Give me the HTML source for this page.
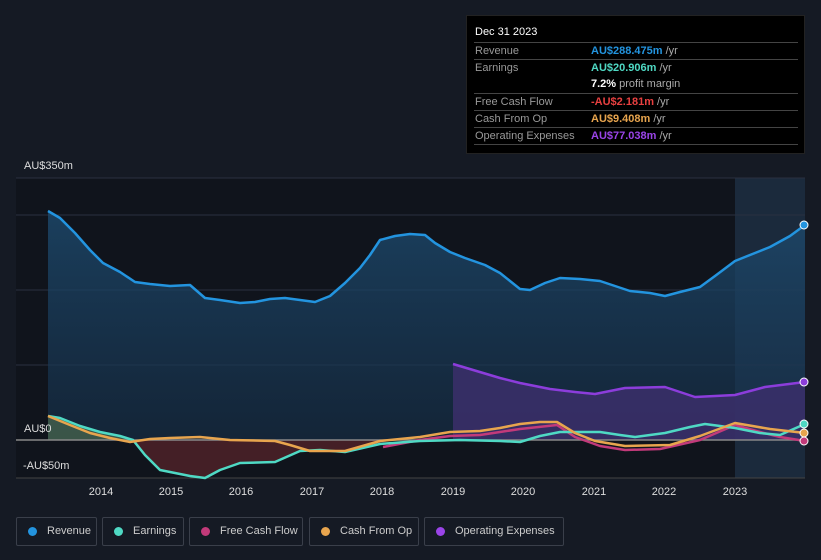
<!DOCTYPE html>
<html><head><style>
body{margin:0;width:821px;height:560px;background:#151a24;font-family:"Liberation Sans",sans-serif;overflow:hidden;position:relative}
.tt{position:absolute;left:466px;top:15px;width:339px;height:139px;background:#000;border:1px solid #222;box-sizing:border-box;font-size:11px;color:#999}
.tt .d{position:absolute;left:8px;top:10px;color:#fff;font-size:11px}
.row{position:absolute;left:7px;width:324px;height:17px;border-top:1px solid #444}
.row span{position:absolute;top:2px}
.row .l{left:1px}.row .v{left:117px;font-weight:bold}
.row .v i{font-style:normal;font-weight:normal;color:#aaa}
.lg{position:absolute;top:517px;height:29px;border:1px solid #3a3f4a;border-radius:2px;box-sizing:border-box;color:#ccc;font-size:11px;line-height:27px;padding-left:30px}
.lg b{position:absolute;left:11px;top:9px;width:9px;height:9px;border-radius:50%}
.ax{position:absolute;color:#ddd;font-size:11px}
</style></head><body>
<svg width="821" height="560" style="position:absolute;left:0;top:0">
<defs>
<linearGradient id="rg" x1="0" y1="0" x2="0" y2="1"><stop offset="0" stop-color="#1d4a6e" stop-opacity=".8"/><stop offset="1" stop-color="#16304a" stop-opacity=".6"/></linearGradient>
</defs>
<rect x="16" y="178" width="789" height="300" fill="#10141c"/>
<rect x="735" y="178" width="70" height="300" fill="#1b2a3c"/>
<g stroke="#2a3040" stroke-width="1">
<line x1="16" y1="178" x2="805" y2="178"/><line x1="16" y1="215" x2="805" y2="215"/><line x1="16" y1="290" x2="805" y2="290"/><line x1="16" y1="365" x2="805" y2="365"/><line x1="16" y1="478" x2="805" y2="478" stroke="#444"/>
</g>
<path d="M48,211 L60,218 L75,233 L90,250 L103,263 L120,272 L135,282 L150,284 L170,286 L190,285 L205,298 L220,300 L240,303 L255,302 L270,299 L285,298 L300,300 L315,302 L330,296 L345,283 L360,268 L370,255 L380,240 L395,236 L410,234 L425,235 L435,243 L450,252 L465,258 L485,265 L500,273 L510,281 L520,289 L530,290 L545,283 L560,278 L580,279 L600,281 L615,286 L630,291 L650,293 L665,296 L680,292 L700,287 L715,276 L735,261 L755,253 L770,247 L790,236 L805,225 L805,440 L48,440Z" fill="url(#rg)"/>
<path d="M453,364 L500,378 L520,383 L550,389 L575,392 L595,394 L610,391 L625,388 L665,387 L695,397 L735,395 L765,387 L805,382 L805,440 L453,440Z" fill="#3b2f6b" opacity=".85"/>
<path d="M133,440 L145,455 L160,470 L175,473 L190,476 L205,478 L220,470 L240,463 L275,462 L300,451 L320,450 L345,452 L380,444 L390,440Z" fill="#4a2028" opacity=".9"/>
<path d="M48,416 L60,418 L80,426 L100,432 L120,436 L133,440 L48,440Z" fill="#4a6a50" opacity=".7"/>
<line x1="16" y1="440" x2="805" y2="440" stroke="#888" stroke-width="1.5"/>
<g fill="none" stroke-width="2.5" stroke-linejoin="round">
<path stroke="#2394df" d="M48,211 L60,218 L75,233 L90,250 L103,263 L120,272 L135,282 L150,284 L170,286 L190,285 L205,298 L220,300 L240,303 L255,302 L270,299 L285,298 L300,300 L315,302 L330,296 L345,283 L360,268 L370,255 L380,240 L395,236 L410,234 L425,235 L435,243 L450,252 L465,258 L485,265 L500,273 L510,281 L520,289 L530,290 L545,283 L560,278 L580,279 L600,281 L615,286 L630,291 L650,293 L665,296 L680,292 L700,287 L715,276 L735,261 L755,253 L770,247 L790,236 L805,225"/>
<path stroke="#8c3ddb" d="M453,364 L500,378 L520,383 L550,389 L575,392 L595,394 L610,391 L625,388 L665,387 L695,397 L735,395 L765,387 L805,382"/>
<path stroke="#c23a7a" d="M383,447 L420,440 L450,436 L480,435 L500,432 L520,429 L557,425 L575,437 L600,446 L625,450 L660,449 L700,440 L735,425 L760,432 L780,437 L805,441"/>
<path stroke="#4fd9c4" d="M48,416 L60,418 L80,426 L100,432 L120,436 L133,440 L145,455 L160,470 L175,473 L190,476 L205,478 L220,470 L240,463 L275,462 L300,451 L320,450 L345,452 L380,444 L420,441 L460,440 L500,441 L520,442 L540,436 L560,432 L600,432 L620,435 L635,437 L665,433 L690,427 L705,424 L720,426 L735,428 L760,433 L780,435 L805,424"/>
<path stroke="#e8a54e" d="M48,416 L70,425 L90,433 L110,438 L130,442 L150,439 L170,438 L200,437 L230,440 L275,441 L290,445 L310,451 L345,451 L380,441 L420,437 L450,432 L480,431 L500,428 L520,424 L540,422 L557,422 L575,433 L595,441 L625,446 L670,445 L700,436 L735,423 L770,429 L805,433"/>
</g>
<g stroke="#fff" stroke-width="1">
<circle cx="804" cy="225" r="4" fill="#2394df"/><circle cx="804" cy="382" r="4" fill="#8c3ddb"/><circle cx="804" cy="424" r="4" fill="#4fd9c4"/><circle cx="804" cy="433" r="4" fill="#e8a54e"/><circle cx="804" cy="441" r="4" fill="#c23a7a"/>
</g>
<g fill="#ddd" font-size="11" font-family="Liberation Sans" text-anchor="middle">
<text x="101" y="495">2014</text><text x="171" y="495">2015</text><text x="241" y="495">2016</text><text x="312" y="495">2017</text><text x="382" y="495">2018</text><text x="453" y="495">2019</text><text x="523" y="495">2020</text><text x="594" y="495">2021</text><text x="664" y="495">2022</text><text x="735" y="495">2023</text>
</g>
</svg>
<div class="ax" style="left:24px;top:160px">AU$350m</div>
<div class="ax" style="left:24px;top:423px">AU$0</div>
<div class="ax" style="left:23px;top:460px">-AU$50m</div>
<div class="tt">
<div class="d">Dec 31 2023</div>
<div class="row" style="top:26px"><span class="l">Revenue</span><span class="v" style="color:#2394df">AU$288.475m <i>/yr</i></span></div>
<div class="row" style="top:43px"><span class="l">Earnings</span><span class="v" style="color:#4fd9c4">AU$20.906m <i>/yr</i></span></div>
<div class="row" style="top:60px;border-top:none"><span class="v" style="color:#fff">7.2% <i>profit margin</i></span></div>
<div class="row" style="top:77px"><span class="l">Free Cash Flow</span><span class="v" style="color:#e84040">-AU$2.181m <i>/yr</i></span></div>
<div class="row" style="top:94px"><span class="l">Cash From Op</span><span class="v" style="color:#e8a54e">AU$9.408m <i>/yr</i></span></div>
<div class="row" style="top:111px"><span class="l">Operating Expenses</span><span class="v" style="color:#9a44e8">AU$77.038m <i>/yr</i></span></div>
<div class="row" style="top:128px;height:0"></div>
</div>
<div class="lg" style="left:16px;width:81px"><b style="background:#2394df"></b>Revenue</div>
<div class="lg" style="left:102px;width:82px"><b style="background:#4fd9c4"></b>Earnings</div>
<div class="lg" style="left:189px;width:114px"><b style="background:#c23a7a"></b>Free Cash Flow</div>
<div class="lg" style="left:309px;width:110px"><b style="background:#e8a54e"></b>Cash From Op</div>
<div class="lg" style="left:424px;width:140px"><b style="background:#9a44e8"></b>Operating Expenses</div>
</body></html>
